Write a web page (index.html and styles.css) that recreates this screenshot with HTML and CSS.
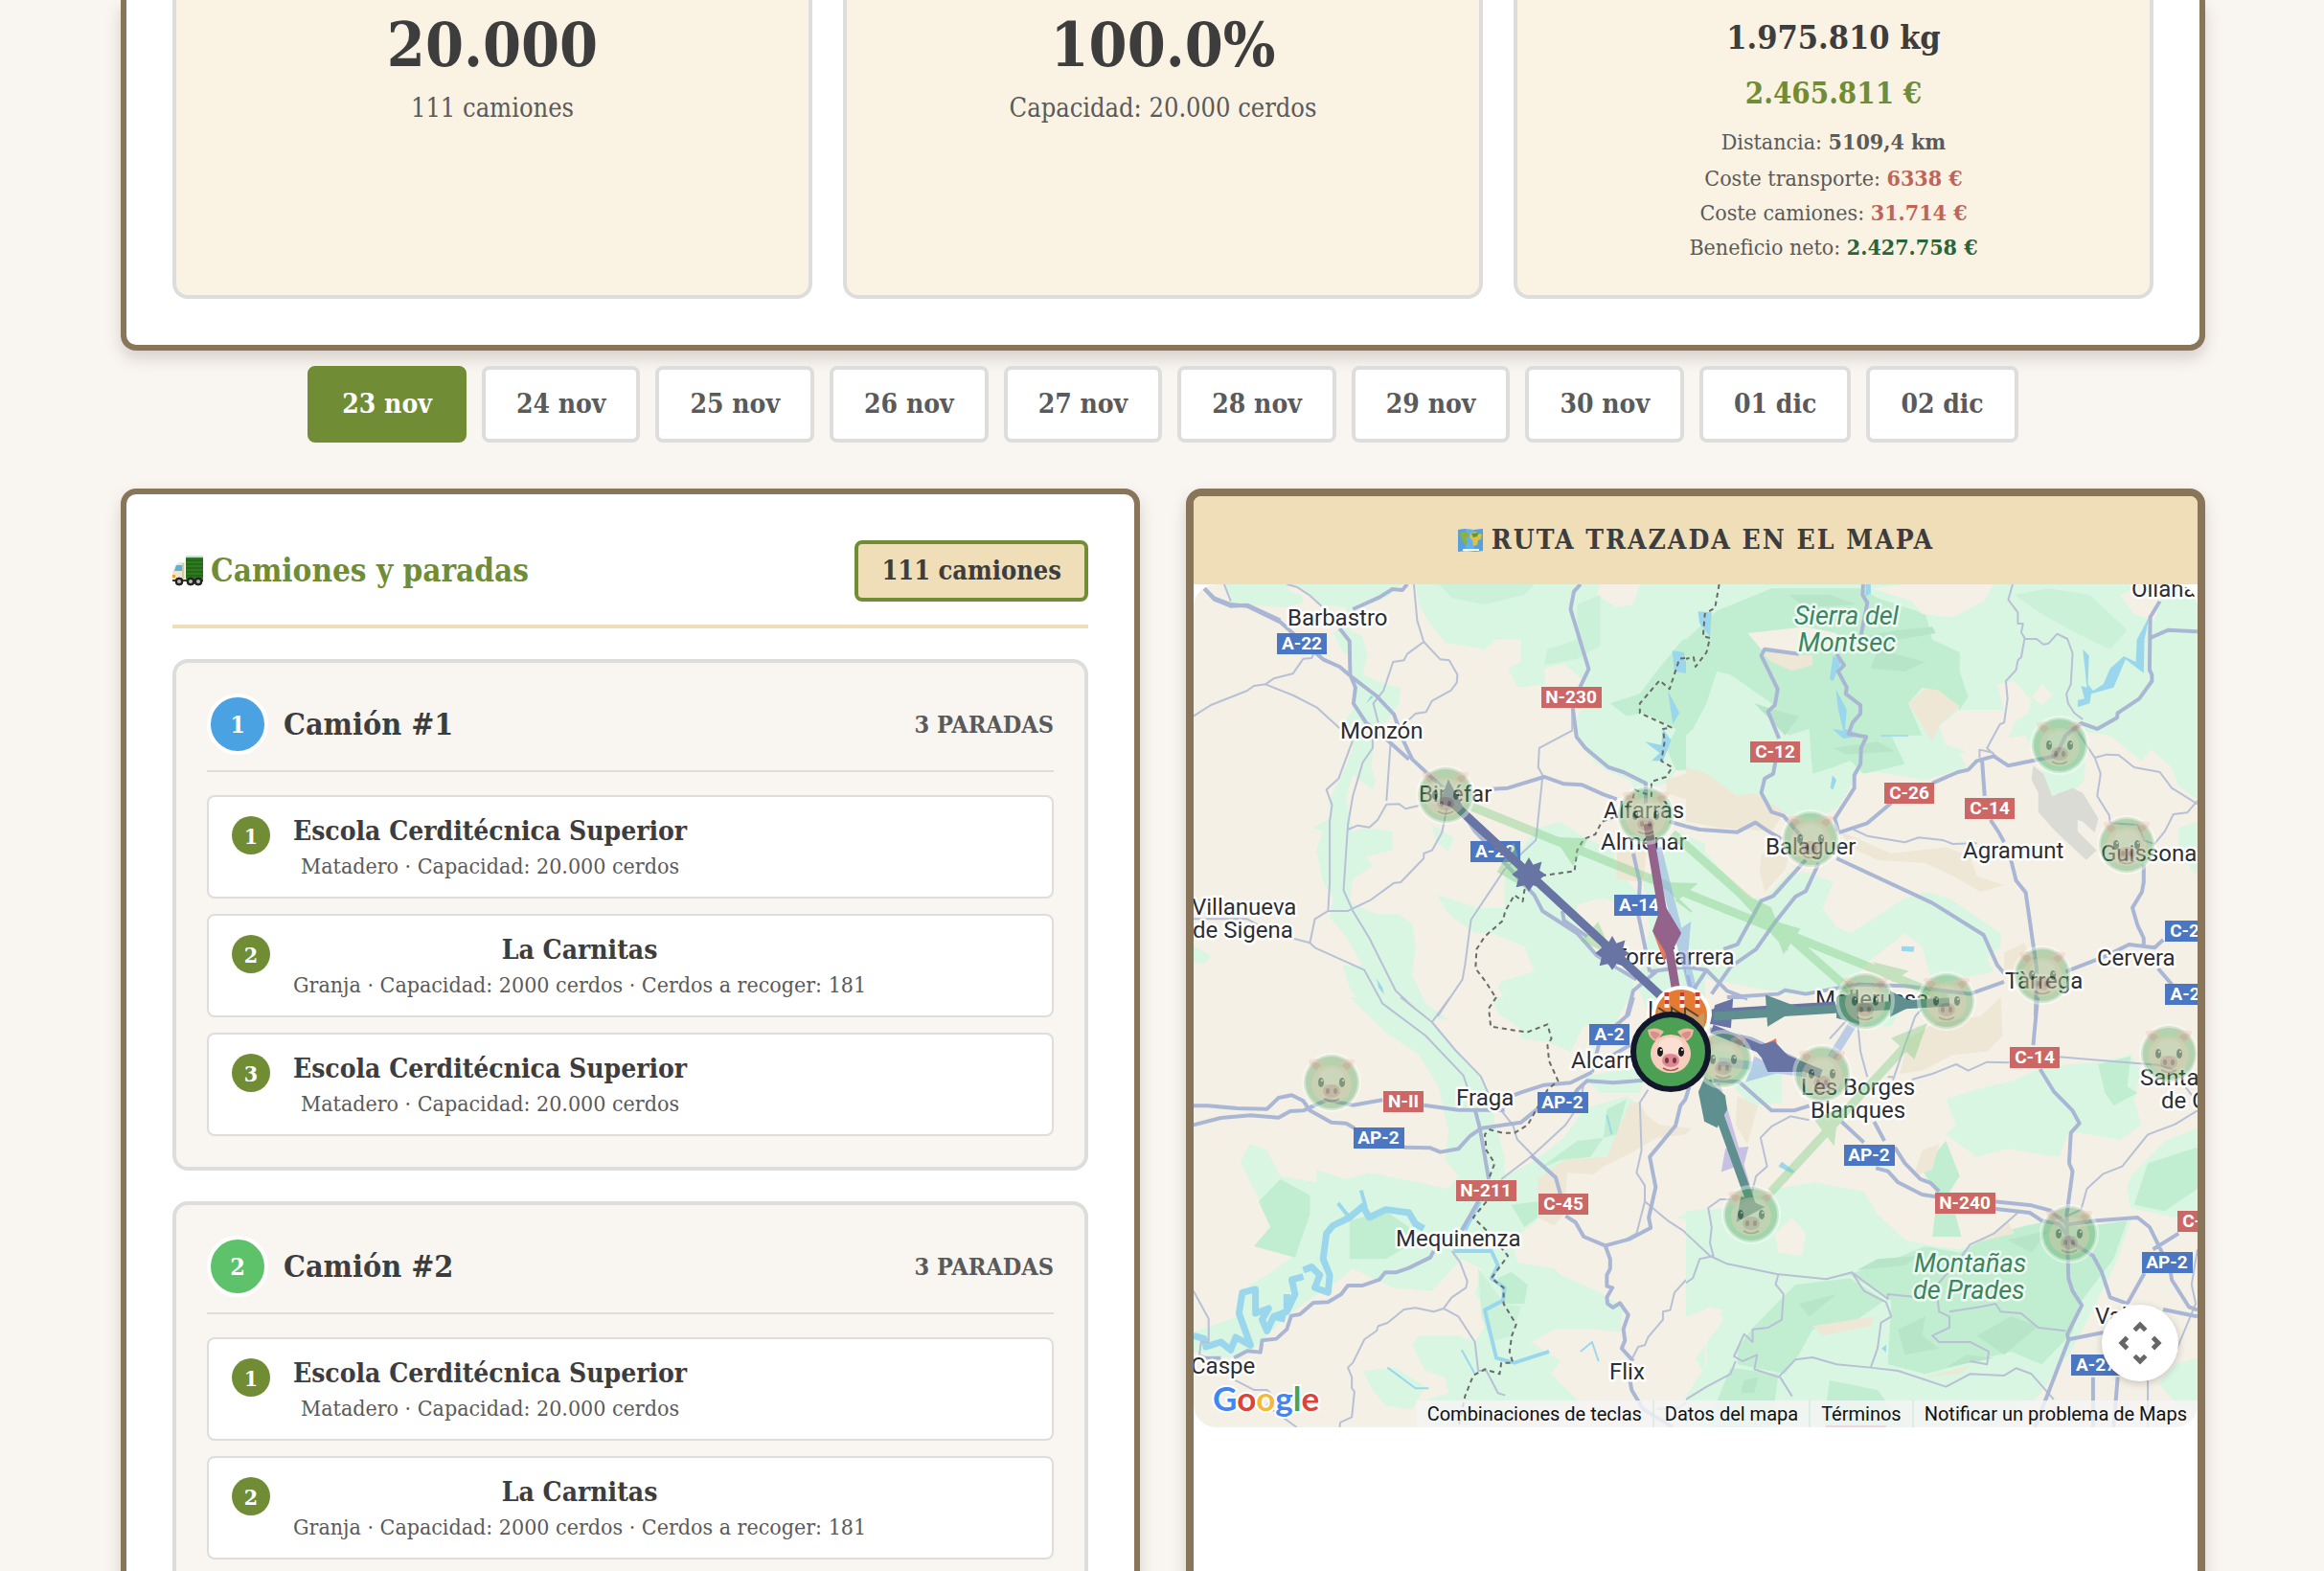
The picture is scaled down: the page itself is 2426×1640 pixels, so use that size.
FILE: index.html
```html
<!DOCTYPE html>
<html lang="es">
<head>
<meta charset="utf-8">
<meta name="viewport" content="width=device-width, initial-scale=1">
<title>Rutas de camiones</title>
<link rel="stylesheet" href="styles.css">
</head>
<body>
<div class="page">
  <section class="panel summary">
    <div class="stat">
      <div class="stat-value">20.000</div>
      <div class="stat-note">111 camiones</div>
    </div>
    <div class="stat">
      <div class="stat-value">100.0%</div>
      <div class="stat-note">Capacidad: 20.000 cerdos</div>
    </div>
    <div class="stat">
      <div class="stat-kg">1.975.810 kg</div>
      <div class="stat-income">2.465.811 €</div>
      <div class="stat-line stat-distance">Distancia: <strong>5109,4 km</strong></div>
      <div class="stat-line">Coste transporte: <strong class="cost">6338 €</strong></div>
      <div class="stat-line">Coste camiones: <strong class="cost">31.714 €</strong></div>
      <div class="stat-line">Beneficio neto: <strong class="profit">2.427.758 €</strong></div>
    </div>
  </section>

  <nav class="days">
    <button class="day active" type="button">23 nov</button>
    <button class="day" type="button">24 nov</button>
    <button class="day" type="button">25 nov</button>
    <button class="day" type="button">26 nov</button>
    <button class="day" type="button">27 nov</button>
    <button class="day" type="button">28 nov</button>
    <button class="day" type="button">29 nov</button>
    <button class="day" type="button">30 nov</button>
    <button class="day" type="button">01 dic</button>
    <button class="day" type="button">02 dic</button>
  </nav>

  <main class="columns">
    <section class="panel trucks">
      <header class="trucks-head">
        <h2>
          <svg class="emoji" viewBox="0 0 32 32" aria-hidden="true">
            <rect x="14" y="0" width="18" height="25" rx="1" fill="#2f7a1f"/>
            <path d="M14 5h18M14 9h18M14 13h18M14 17h18M14 21h18" stroke="#1c5512" stroke-width="1"/>
            <path d="M14 1h18" stroke="#cfdbe8" stroke-width="2"/>
            <path d="M4 9l3-2h6v19H0v-9z" fill="#eee6d0"/>
            <path d="M4 10h6v6H2z" fill="#5cb3d4"/>
            <path d="M11 8v16" stroke="#b8ac90" stroke-width="1"/>
            <rect x="0" y="20" width="3" height="3" fill="#e9a33a"/>
            <path d="M0 25h32v2H0z" fill="#3a3a3a"/>
            <g fill="#222" stroke="#222"><circle cx="7" cy="27" r="4"/><circle cx="19" cy="27" r="4"/><circle cx="27" cy="27" r="4"/></g>
            <g fill="#bbb"><circle cx="7" cy="27" r="2"/><circle cx="19" cy="27" r="2"/><circle cx="27" cy="27" r="2"/></g>
          </svg>
          Camiones y paradas
        </h2>
        <span class="badge">111 camiones</span>
      </header>

      <article class="truck">
        <header class="truck-head">
          <span class="truck-num blue">1</span>
          <h3>Camión #1</h3>
          <span class="stops-count">3 PARADAS</span>
        </header>
        <ol class="stops">
          <li class="stop"><span class="stop-num">1</span><div class="stop-info"><strong>Escola Cerditécnica Superior</strong><span>Matadero · Capacidad: 20.000 cerdos</span></div></li>
          <li class="stop"><span class="stop-num">2</span><div class="stop-info"><strong>La Carnitas</strong><span>Granja · Capacidad: 2000 cerdos · Cerdos a recoger: 181</span></div></li>
          <li class="stop"><span class="stop-num">3</span><div class="stop-info"><strong>Escola Cerditécnica Superior</strong><span>Matadero · Capacidad: 20.000 cerdos</span></div></li>
        </ol>
      </article>

      <article class="truck">
        <header class="truck-head">
          <span class="truck-num green">2</span>
          <h3>Camión #2</h3>
          <span class="stops-count">3 PARADAS</span>
        </header>
        <ol class="stops">
          <li class="stop"><span class="stop-num">1</span><div class="stop-info"><strong>Escola Cerditécnica Superior</strong><span>Matadero · Capacidad: 20.000 cerdos</span></div></li>
          <li class="stop"><span class="stop-num">2</span><div class="stop-info"><strong>La Carnitas</strong><span>Granja · Capacidad: 2000 cerdos · Cerdos a recoger: 181</span></div></li>
        </ol>
      </article>
    </section>

    <section class="panel route">
      <h2 class="route-head">
        <svg class="emoji" viewBox="0 0 28 28" aria-hidden="true">
          <path d="M1 3l8-1 9 1 9-1v23l-9 1-9-1-8 1z" fill="#63b0ea"/>
          <path d="M1 3l8-1v23l-8 1zM18 3l9-1v23l-9 1z" fill="#4a90cf" opacity=".5"/>
          <path d="M3 6l7-1 3 4-4 3 2 3-2 5-3-5-2-4z" fill="#8cb23c"/>
          <path d="M14 7l5-2 7 3-1 5-3 1-1 5-4 1-1-6-3-3z" fill="#d9c14a"/>
          <path d="M15 7l8-1-2 4-4 1z" fill="#5c9a38"/>
          <path d="M6 24h17" stroke="#fff" stroke-width="2"/>
        </svg>
        RUTA TRAZADA EN EL MAPA
      </h2>
      <div class="map">
        <svg class="map-canvas" viewBox="0 0 1048 880" preserveAspectRatio="xMidYMid slice" role="img" aria-label="Mapa de la ruta">
          <defs>
            <g id="pig">
              <path d="M-24-23q9-4 17 2l-8 10q-8-2-9-12zM24-23q-9-4-17 2l8 10q8-2 9-12z" fill="#f0b7a6"/>
              <path d="M-21-21q6-1 10 3l-5 5q-5-2-5-8zM21-21q-6-1-10 3l5 5q5-2 5-8z" fill="#d98f8a"/>
              <ellipse cx="0" cy="2" rx="21" ry="20" fill="#f7cdbd"/>
              <ellipse cx="0" cy="-6" rx="13" ry="9" fill="#fbdfd2"/>
              <ellipse cx="-11" cy="0" rx="3" ry="5" fill="#1d1d1f"/>
              <ellipse cx="11" cy="0" rx="3" ry="5" fill="#1d1d1f"/>
              <circle cx="-10" cy="-2" r="1" fill="#fff"/><circle cx="12" cy="-2" r="1" fill="#fff"/>
              <ellipse cx="0" cy="9" rx="9" ry="7" fill="#dd8794"/>
              <ellipse cx="-4" cy="9" rx="2" ry="3" fill="#7c3340"/>
              <ellipse cx="4" cy="9" rx="2" ry="3" fill="#7c3340"/>
              <path d="M-8 17q8 5 16 0" fill="none" stroke="#a8605a" stroke-width="1.5"/>
            </g>
            <g id="farm">
              <circle r="29" fill="#4ca053" fill-opacity=".38" stroke="#fff" stroke-opacity=".4" stroke-width="4"/>
              <use href="#pig" opacity=".34"/>
            </g>
          </defs>
          <rect width="1048" height="880" fill="#f4f0e6"/>

          <!-- north-west -->
          <g transform="translate(-6 -9) scale(.3444 .3333)">
            <g class="wood">
              <path d="M110 27H300L310 50 345 60 350 85 290 100 240 95 130 90Z"/>
              <path d="M320 27H650L600 70 510 105 490 170 530 190 545 250 530 310 600 340 645 350 640 400 600 460 560 470 565 530 555 600 570 640 560 670 520 640 500 620 480 700 500 800 540 790 620 800 620 860 540 880 560 910 500 950 490 1020 570 1060 640 1060 680 1090 690 1160 680 1250 720 1340 790 1390H560L490 1290 470 1220 530 1220 480 1130 430 1070 440 1010 410 960 390 860 410 800 380 790 430 760 430 700 470 620 500 540 470 460 500 420 500 250 470 240 440 180 490 140 480 100 400 90 350 40Z"/>
              <path d="M690 27H1568V620L1480 610 1460 650 1410 660 1370 700 1340 640 1290 620 1240 590 1190 530 1170 470 1190 420 1240 400 1170 300 1100 290 1090 340 1000 350 970 290 1010 270 1010 200 930 200 900 230 780 210 740 160 700 90Z"/>
              <path d="M1000 870L1060 790 1130 770 1200 820 1290 860 1300 920 1370 1000 1370 1040 1250 1010 1180 1030 1180 1100 1240 1180 1350 1260 1350 1300 1300 1390H1000L940 1290 950 1270 1050 1240 1020 1160 920 1120 870 1120 790 1060 755 1000 880 1040 960 1040 960 940Z"/>
              <path d="M1440 880L1490 800 1568 840V1380H1400L1360 1280 1380 1200 1400 1100 1380 960Z"/>
              <path d="M17 1160L70 1190 50 1215 17 1210ZM740 780L805 820 790 865 750 830Z"/>
            </g>
            <path fill="#f4f0e6" d="M1250 27H1370L1350 90 1300 100 1240 60ZM1080 290L1140 275 1200 330 1190 400 1090 420Z"/>
            <path class="wood-2" d="M1180 90L1250 60 1250 220 1180 260 1080 280 1090 230 1180 200ZM760 27H1050L1020 60 900 90 800 70Z"/>
            <path class="wood-3" d="M1500 200L1568 180V600L1480 610 1450 540 1480 480 1380 430 1330 440 1280 400 1370 370 1420 300Z"/>
            <path class="field" d="M1300 800L1390 870 1380 960 1300 950ZM1450 640L1568 600V720L1450 680Z"/>
            <path class="lake" d="M1545 112L1568 115 1565 200ZM1468 235L1505 240 1505 265 1540 275 1535 310 1475 300ZM1455 360L1490 430 1470 465ZM1440 480L1465 515 1440 580 1405 580 1430 555 1385 520 1435 530ZM540 400L555 375 562 380ZM572 1262L590 1290 595 1312 578 1290Z"/>
            <g class="lane">
              <path d="M17 440L70 405 180 360 200 345 235 340 260 322 318 307 350 260 375 258 410 180M235 340L320 375 390 412 460 478M300 27L330 35 370 62 405 95M110 27L130 80M685 27L695 140 715 207 665 245 655 265 622 270 593 360 562 400 577 460M715 207L765 262 792 265 817 310 815 335 797 360 740 392 722 427 690 432 650 470"/>
              <path d="M500 515L457 635 420 670 437 718 430 770V960L425 1050 385 1075 370 1150 385 1165 535 1235 590 1340 640 1380M560 480V540L530 585 500 690 485 780 472 985 500 1050 550 1135 630 1300 712 1380M614 530L602 705M700 720L660 730 640 715 602 716 575 765 550 788 515 782 485 795M785 730L770 805 740 860 715 870 715 885 645 960 625 962 555 1015 485 1050 425 1050"/>
              <path d="M1075 630L1055 828 960 920 858 1078 840 1220 832 1265 757 1380M1165 410V485L1065 540 1062 600 1078 630M17 1075H180L260 1120 370 1150"/>
            </g>
            <g class="road">
              <path d="M50 40L80 70 130 90 180 95 280 145 340 200 410 262 460 285 500 320 570 375 625 435 650 510 680 575 800 690 870 800 960 900 1050 1000 1075 1050 1180 1120 1240 1190 1360 1265"/>
              <path d="M50 40L80 74 130 95 180 92 280 140"/>
              <path d="M665 27L650 45 620 42 580 68 500 105M460 165L490 205 492 310 508 350 502 400 540 460 610 520 670 575M920 668L970 665 1080 630 1140 652 1195 655 1260 685 1300 700"/>
              <path d="M1190 27L1170 50 1160 105 1215 292 1165 400 1178 505 1205 540 1275 600 1320 615 1388 650V720M1350 870L1370 960 1365 1060 1385 1160 1400 1240M1460 770L1510 785M1400 1240L1510 1225M1330 1380L1350 1300 1425 1235M1135 1050L1140 1080 1210 1130M1500 1180L1525 1300"/>
            </g>
            <path class="border" d="M1568 235L1540 280 1535 255 1490 260 1460 355 1430 328 1370 400V430L1465 475 1440 480 1445 520 1435 580 1468 600 1450 630 1405 645V690L1355 670 1340 740 1255 770 1235 810 1200 825 1180 860 1172 925 1070 940 1020 985 1015 1020 990 1000 962 1050 955 1080 900 1130 875 1170 872 1230 905 1275 932 1320"/>
          </g>

          <!-- north-east -->
          <g transform="translate(514 -9) scale(.3571 .3333)">
            <g class="wood">
              <path d="M0 27H1495V700L1440 660 1420 600 1360 545 1330 580 1240 500 1170 490 1165 640 1120 690 1060 680 1040 600 990 500 860 520 800 560 820 600 700 640 560 615 500 620 470 680 440 730 380 760 300 750 200 700 140 690 60 620 0 600Z"/>
              <path d="M0 860L60 870 180 1010 230 1010 300 930 360 930 430 960 400 1040 440 1100 480 1120 640 1010 700 990 770 1010 920 1120 920 1160 880 1200 900 1240 720 1280 690 1160 640 1120 520 1220 480 1300 300 1310 0 1250Z"/>
              <path d="M1440 790L1495 770V940L1440 870Z"/>
            </g>
            <path class="wood-3" d="M90 110L250 40H515L560 70 700 120 720 200 800 240 800 300 825 380 800 420 740 360 690 350 650 400 690 500 600 500 640 590 520 620 480 580 430 600 370 620 360 480 300 500 250 400 130 310 90 300 60 400 20 480 0 500V200Z"/>
            <path class="wood-2" d="M960 60L1060 40 1180 60 1290 170 1240 230 1140 180 1040 120Z"/>
            <path class="shade" d="M520 190L620 170 720 160 730 180 600 205ZM300 60L420 60 500 90 350 100ZM430 540L560 520 610 550 470 560ZM560 230L700 270 640 300 540 290ZM200 400L290 500 330 440 260 420Z"/>
            <path fill="#f4f0e6" d="M545 40L640 27H900L870 80 780 130 690 120 660 80ZM1270 60L1340 27H1400L1370 140 1310 120ZM180 180L350 160 440 180 430 230 330 240 220 230ZM740 470L800 420 930 420 910 340 960 330 1010 390 1000 430 960 460 940 520 890 510 850 560 760 530ZM1040 340L1072 375 1040 405 1010 380Z"/>
            <path class="field" d="M220 240L370 250 370 280 310 298 250 270ZM650 400L700 352 740 360 800 410 740 470 720 520ZM0 600L60 620 150 690 200 680 290 740 250 800 100 790 0 770ZM450 800L600 870 760 850 830 880 850 940 930 970 860 990 780 940 700 900 560 890 480 850ZM220 870L300 880 290 920 230 990 215 930ZM930 1180L990 1150 1020 1240 930 1260Z"/>
            <path fill="#dadbd5" d="M1015 595L1045 620 1070 690 1130 665 1160 680 1205 760 1195 805 1160 770 1145 765V800L1200 860 1170 890 1080 800 1030 740V680L1010 640Z"/>
            <path class="lake" d="M525 27H540V55L525 65ZM35 112L75 115 70 190 40 150ZM430 250L455 270 430 330 420 325ZM438 355L470 420 465 480 520 500 460 510 428 480 460 485 445 420ZM1355 125L1340 200 1338 305 1285 262 1250 350 1185 370 1180 400 1145 412V390L1165 385 1155 345 1172 350 1160 230 1178 250 1175 340 1190 360 1220 340 1240 290 1280 252 1315 270 1318 200ZM428 625L440 640 430 670 422 665ZM630 1160L668 1162 665 1178 630 1175ZM570 499H650V503H570Z"/>
            <path class="lane" d="M955 27L942 75 970 115V150H985L980 178 990 195 980 255 970 265 965 295 935 330 940 385 930 460 918 465 895 510 880 540 905 565M990 198H1025L1045 215 1060 212 1085 182 1115 198 1130 243 1125 340 1112 370 1117 400 1135 430 1160 450M1140 480L1195 570 1212 620 1202 690 1237 750 1240 775M1195 570L1230 560 1265 562 1310 600 1385 615 1420 665 1495 715M1495 705L1465 742 1425 747 1400 800 1370 840 1340 830 1320 780 1240 775M490 795L530 815 640 835 680 820 750 828 780 840 850 838M858 570V545L900 555"/>
            <g class="road">
              <path d="M518 27L516 60 530 85 512 185M440 245L462 280 445 300 470 350 467 370 510 405V432L487 460 475 495 527 505 512 540 510 590 492 625V665L435 760 445 800M330 245L230 230 220 250 268 355 260 405 240 425 272 510M262 580L255 620 230 635 220 680 250 740 285 752 340 820M0 785L40 795 150 803 203 773 240 800 280 825"/>
              <path d="M445 805L530 775 600 712M720 650L795 615 825 608 850 580 900 565 942 595 1080 565 1110 500 1155 462 1202 480 1260 445 1262 430 1325 385 1362 330V310L1355 295 1357 130 1385 80M1357 195L1410 170 1495 175M865 570L873 690M890 765L912 800 930 835M950 890L965 955 993 992 1025 1230 1022 1380"/>
              <path d="M440 885L720 1025 870 1125 910 1220 930 1245M350 890L255 1003 220 1018 150 1155 110 1170M388 900L350 988 320 1005 257 1090 205 1170 130 1225 75 1310M1338 905V960L1333 990 1305 1040 1320 1095 1338 1135V1165M0 1225L60 1235 120 1300 180 1325M120 1320L270 1310 290 1298 350 1310 500 1280 640 1285 830 1310 930 1272M1110 1240L1230 1190 1295 1155 1370 1165 1395 1140M1380 1230L1420 1280M60 1235L20 1300"/>
            </g>
            <path class="border" d="M97 27L85 100 55 120 50 190 70 195 60 240 28 285 22 255 0 260"/>
          </g>

          <!-- south-west -->
          <g transform="translate(-6 431) scale(.3444 .3333)">
            <g class="wood">
              <path d="M490 0H640L740 80 880 240 920 320 930 390 960 500 960 560 1040 520 1140 440 1200 350 1330 310 1360 330 1340 420 1290 480 1240 520 1150 510 1060 570V700L980 760 1000 830 1110 850 1130 870 1240 920 1320 970 1310 1050 1240 1040 1110 1040 1040 1080 1100 1120 1130 1140 1100 1180 1190 1270 1000 1300 820 1347H740L700 1270 790 1240 780 1190 720 1170 680 1090 700 1060 820 1060 870 1080 920 1000 870 930 890 850 830 820 740 920 620 910 500 850 440 900 350 960 300 1000 200 1100 120 1130 17 1110V1050L150 1000 160 920 270 850 320 810 200 780 250 720 210 620 160 520 170 490 190 460 240 480 280 560 390 580V540L480 570 550 550 700 580 790 600 820 560 780 510 790 420 760 280 700 180 600 110Z"/>
              <path d="M920 0H1320L1300 80 1200 90 1160 170 1090 140 1010 130V100L940 50ZM530 1170L630 1160 720 1220 680 1290 600 1280 560 1230ZM1480 690L1568 660V710ZM1510 1000L1568 950V980ZM1530 1050L1568 1030V1180L1530 1120ZM1200 250L1400 210 1370 300 1250 300Z"/>
            </g>
            <path class="wood-3" d="M280 570L370 620V680L325 815 200 780 250 720 215 640ZM490 700L600 670 670 720 680 770 600 820H490ZM940 880L980 860 1030 900 1020 960 960 960ZM980 650L1060 640V690L1020 720ZM1270 350L1330 320 1300 430 1260 440ZM1060 540L1180 450 1260 440 1220 500 1130 510Z"/>
            <path class="wood-2" d="M880 850L960 960 1010 970 980 1060 920 1080 890 1000Z"/>
            <path class="field" d="M1340 330H1370L1390 370 1430 400 1525 410 1510 430 1420 440 1340 490 1260 530 1230 555 1150 550 1140 680 1110 715 1060 690V570L1140 510 1270 500Z"/>
            <path class="river" d="M17 1060L50 1070 55 1095 100 1080 130 1105 145 1065 190 1090 155 990 165 925 205 915 205 990 245 975 225 1010 240 1045 260 1000 300 985 325 930 315 885 350 875M350 855L375 845 400 870 385 910 425 925 430 870 410 820 420 740 440 715 490 690 530 655 550 690 600 665 670 675 690 710 715 725M260 1000L295 1008M300 985V930"/>
            <path class="river thin" d="M455 645L490 690M525 605L540 660M805 795H920L940 840 920 880 960 910 955 950 900 980 935 1130 990 1145 1050 1125 1095 1110M885 640L840 730"/>
            <path class="river hair" d="M1190 1110L1225 1080 1245 1140M605 1160L690 1225H730M830 1105L870 1180M1270 370L1285 430"/>
            <path class="lane" d="M580 0L590 20 720 120 835 245 850 290M645 0L740 78 810 165 888 248 910 300M795 0L740 78M950 355L985 400 998 445 1045 495 1145 400 1190 330 1200 270M1045 495L950 570M1395 290L1370 330 1375 480 1360 550 1385 590V640L1455 700 1500 730 1568 795M1385 640L1360 740 1330 757M800 795L825 830 847 890 843 910 800 940 775 975 820 1000 870 1080 880 1170 905 1170 940 1240 962 1247M775 975L745 985 690 973 655 978 605 1020 577 1030 572 1045 535 1072 500 1145 485 1160 497 1190V1225L505 1235 497 1315 462 1332 460 1347M17 920L63 1007V1080H40L35 1120 60 1130M135 1195L200 1230H240L260 1250 240 1280 330 1347M1510 885L1475 925 1462 980 1440 985V1010L1395 1065 1385 1090 1365 1095 1345 1135M1568 1225L1490 1285 1420 1290"/>
            <g class="road">
              <path d="M17 340H60L150 348 240 350 275 315 315 307 350 325 370 355 435 392 480 395 505 410M655 470L735 472 765 485 820 475 855 435 890 410 1010 392 1060 350M17 400L100 378 190 370 275 377 310 357 350 355 420 322 500 338 590 322M715 338L820 353H960M980 310L1010 298 1080 275 1160 268 1225 235M1150 345L1180 290 1210 262 1290 268 1380 260M870 350L885 410 912 570M880 640L830 730"/>
              <path d="M745 795L735 815 670 848 630 862H598L580 885 530 903H485L465 930 425 955 380 957 340 993 313 998 300 1040 268 1070 225 1075 220 1112 180 1108 140 1130M35 1130H100M1350 0L1335 55 1250 130 1225 235M1040 495L1115 565 1130 620M1145 685L1175 705 1200 750 1265 778 1340 757 1403 722 1397 690 1418 595 1400 500 1478 403 1493 340 1508 320 1520 280M1265 778L1280 820V850L1270 870V905L1287 910 1270 940 1272 960 1288 972 1310 958 1335 995 1320 1040 1325 1075 1315 1100 1350 1140M1340 1200L1345 1230 1380 1290 1470 1347M1340 150L1290 180"/>
            </g>
            <path class="border" d="M935 0L912 35 918 92 1028 110 1090 85 1102 130 1090 150 1095 200 1122 262 1090 290 1030 400 990 425H955L915 415 900 430 905 480 930 520 912 570M905 640L865 690 910 735 970 810 945 845 920 880 957 910V960L995 1025 982 1060 975 1110 985 1145H950L945 1180 900 1165 865 1185 840 1250 820 1347"/>
          </g>

          <!-- south-east -->
          <g transform="translate(514 431) scale(.3571 .3333)">
            <g class="wood">
              <path d="M760 320L860 285 960 260 1050 215 1200 205 1300 180 1330 230 1310 320 1330 400 1270 447 1120 420 1090 500 940 475 850 500 760 430 790 400ZM0 670L120 660 260 600 380 580 520 610 560 680 640 760 700 775 800 790 1000 710 1100 730 1300 700 1250 850 1130 1100 1030 1250 900 1347H0V1250L60 1150V1050L110 980 70 970 0 1000ZM1300 560L1400 450 1495 410V680L1430 690 1300 660 1290 600ZM1380 1210L1430 1150 1495 1130V1300L1440 1280ZM60 150L280 240V330L190 340 130 270ZM560 0L640 10 600 90 520 90Z"/>
            </g>
            <path class="wood-3" d="M720 500L760 450 800 560 770 610 805 750H720L735 620 690 540ZM440 880L560 840 700 780 800 800 900 740 1060 700 1150 720 1290 700 1250 820 1150 960 1130 1050 1040 1150 950 1110 700 1180 590 1150 600 950 480 870ZM200 1030L320 900 480 880 580 950 500 1010 370 1040 330 1120 290 1180 150 1150V1100ZM130 1160L270 1180 250 1347H60ZM1310 650L1350 520 1495 470V600L1400 670ZM1205 210L1300 185 1290 280 1320 300 1250 340 1225 300ZM420 1200L560 1230 640 1347H400Z"/>
            <path class="shade" d="M500 855L560 820 680 810 640 840ZM620 1040L700 1000 690 1060 740 1100 640 1120ZM850 1060L950 1000 1030 1030 930 1120ZM940 760L1060 730 1010 800ZM330 960L440 930 360 1000ZM820 1120L760 1160 900 1130ZM170 1200L210 1190 200 1240 160 1240Z"/>
            <path class="field" d="M625 240L650 130 730 80 860 60 920 0 925 120 880 170 780 180 690 230ZM665 560L690 480 740 460 720 540ZM145 400L150 310 210 340 180 460ZM370 1030L550 1000 540 1030 400 1060ZM860 770L940 700 960 740 880 760ZM690 1190L830 1155 800 1180Z"/>
            <path fill="#f4f0e6" d="M260 740L310 690 350 740 340 810 270 800ZM0 1010L90 980 110 1010 60 1080 0 1180Z"/>
            <path class="lake" d="M280 515L318 545 310 552 270 530ZM572 1100L585 1088V1112Z"/>
            <path class="lane" d="M660 258L720 240 790 210 825 230 880 203 945 205M1090 187L1240 200 1380 212 1420 225 1495 330M1495 355L1430 398 1350 430 1275 530 1220 553 1172 600 1155 665 1115 685M190 620L205 560 237 530 218 440 250 405 305 373 360 385M0 740L70 810 120 835 265 867 410 883 485 862 590 945V930L665 938M130 633H100L65 660 75 720 70 770 80 810 40 820 20 880 0 895M485 862L520 920 585 955 600 1000 570 1020 560 1100 540 1160M0 1260L60 1220 130 1180 145 1140M270 867L262 900 285 930 280 1010 240 1035 195 1040V1080L170 1055 140 1125 165 1140 208 1120 200 1165 270 1190 320 1135 370 1128 440 1150 540 1160 620 1170 760 1220 830 1180 930 1185 965 1162 1010 1180 1075 1260M735 940L740 985 770 1000V1035L720 1060 740 1080H830L885 1110 880 1150 830 1140M770 985L860 970 905 960 920 985 980 990 1030 1035 1110 1045M970 675L900 740 830 775 800 820 735 900M275 1190L310 1250M500 60L510 170 530 250M590 250H605M720 0L670 60 640 150 605 260M420 130L480 60M1495 790L1478 900 1490 960 1420 1140M1350 1200V1347"/>
            <g class="road">
              <path d="M80 260L155 265 250 355H315L360 340M70 100L190 130 330 200M455 390L520 455M555 535L590 545 620 580 690 618 730 625M550 390L580 450M610 470L640 520 685 570 715 582 740 608M900 640L1010 652 1065 668 1115 712 1200 700 1320 690 1355 720 1415 850 1420 885 1470 970 1495 980M900 662L1005 675 1040 700 1090 710 1130 770 1190 810 1215 860 1240 940 1290 960 1340 865M1365 790L1440 740"/>
              <path d="M1028 0L1015 150M1035 225L1075 295 1130 355 1150 395 1125 425 1120 520 1130 545 1113 680 1118 880 1130 920 1157 965 1115 1055 1118 1075 1020 1347M1118 1072L1220 1050M1395 978L1495 1000M1190 1190V1347M1262 1190L1250 1347"/>
            </g>
          </g>

          <!-- road shields -->
          <g class="shield-blue">
            <rect x="87" y="51" width="52" height="22"/><rect x="289" y="268" width="52" height="22"/><rect x="439" y="324" width="52" height="22"/>
            <rect x="1014" y="351" width="52" height="22"/><rect x="1014" y="417" width="42" height="22"/><rect x="413" y="459" width="42" height="22"/>
            <rect x="359" y="530" width="53" height="22"/><rect x="167" y="567" width="53" height="22"/><rect x="679" y="585" width="53" height="22"/>
            <rect x="990" y="697" width="53" height="22"/><rect x="916" y="804" width="52" height="22"/>
          </g>
          <g class="shield-red">
            <rect x="363" y="107" width="63" height="22"/><rect x="581" y="164" width="52" height="22"/><rect x="721" y="207" width="52" height="22"/>
            <rect x="805" y="223" width="52" height="22"/><rect x="198" y="529" width="42" height="22"/><rect x="274" y="622" width="63" height="22"/>
            <rect x="360" y="636" width="52" height="22"/><rect x="852" y="483" width="52" height="22"/><rect x="774" y="635" width="63" height="22"/>
            <rect x="1027" y="654" width="52" height="22"/><rect x="660" y="878" width="63" height="22"/>
          </g>
          <g class="shield-text">
            <text x="113" y="68">A-22</text><text x="315" y="285">A-22</text><text x="465" y="341">A-14</text>
            <text x="1040" y="368">C-25</text><text x="1035" y="434">A-2</text><text x="434" y="476">A-2</text>
            <text x="385" y="547">AP-2</text><text x="193" y="584">AP-2</text><text x="705" y="602">AP-2</text>
            <text x="1016" y="714">AP-2</text><text x="942" y="821">A-27</text>
            <text x="394" y="124">N-230</text><text x="607" y="181">C-12</text><text x="747" y="224">C-26</text>
            <text x="831" y="240">C-14</text><text x="219" y="546">N-II</text><text x="305" y="639">N-211</text>
            <text x="386" y="653">C-45</text><text x="878" y="500">C-14</text><text x="805" y="652">N-240</text>
            <text x="1053" y="671">C-37</text>
          </g>

          <!-- place names -->
          <g class="place">
            <text x="98" y="43">Barbastro</text><text x="153" y="161">Monzón</text><text x="235" y="227">Binéfar</text>
            <text x="428" y="244">Alfarràs</text><text x="425" y="277">Almenar</text>
            <text x="-2" y="345">Villanueva</text><text x="-1" y="369">de Sigena</text>
            <text x="438" y="397">Torrefarrera</text><text x="474" y="452">Lleida</text>
            <text x="979" y="13">Oliana</text><text x="597" y="282">Balaguer</text><text x="803" y="286">Agramunt</text>
            <text x="947" y="289">Guissona</text><text x="847" y="422">Tàrrega</text><text x="943" y="398">Cervera</text>
            <text x="649" y="441">Mollerussa</text><text x="394" y="505">Alcarràs</text><text x="274" y="544">Fraga</text>
            <text x="211" y="691">Mequinenza</text><text x="-3" y="824">Caspe</text><text x="434" y="830">Flix</text>
            <text x="634" y="533">Les Borges</text><text x="644" y="557">Blanques</text>
            <text x="988" y="523">Santa Coloma</text><text x="1010" y="547">de Queralt</text><text x="941" y="772">Valls</text>
          </g>
          <g class="place range">
            <text x="627" y="42">Sierra del</text><text x="631" y="70">Montsec</text>
            <text x="752" y="718">Montañas</text><text x="751" y="746">de Prades</text>
          </g>

          <!-- routes -->
          <g class="trace light-green">
            <path d="M290 232L786 432M500 260L690 428M603 634L760 464"/>
            <path class="head" d="M378 265L410 266 396 292ZM488 312L524 313 504 330 520 342ZM562 318L602 338 620 382ZM604 352L632 360 616 384ZM712 396L744 404 730 414ZM650 560L672 548 668 584ZM730 474L764 460 752 494ZM318 300L334 272 346 316ZM406 372L422 354 436 386Z"/>
          </g>
          <g class="trace light-blue">
            <path d="M484 275L521 424M548 498L640 510M666 494L690 456"/>
            <path class="head" d="M506 362L518 354 514 400ZM578 518L586 494 614 508Z"/>
          </g>
          <g class="trace lilac">
            <path d="M545 522L580 640"/><path class="head" d="M552 612L556 590 578 588 574 604Z"/>
          </g>
          <path fill="#e8795c" d="M480 364L496 352 492 396ZM584 486L608 474 610 490Z"/>
          <g class="trace mauve">
            <path d="M474 250L504 426"/><path class="head" d="M480 362L490 334 508 364 496 388Z"/>
          </g>
          <g class="trace indigo">
            <path d="M268 226L488 430M541 464L655 511M541 448L670 440"/>
            <path class="head" d="M258 228L266 206 282 236ZM350 287L354 294 362 291 360 299 366 303 360 308 363 316 354 313 350 319 346 313 338 315 340 307 334 303 340 298 338 290 346 294ZM437 369L441 376 449 373 447 381 453 385 447 390 450 398 441 395 437 401 433 395 425 397 427 389 421 385 427 380 425 372 433 376ZM585 483L606 478 634 508 600 508 594 494ZM545 440L562 434 560 462 540 458Z"/>
          </g>
          <g class="trace teal">
            <path d="M543 451L789 436M536 518L584 652"/>
            <path class="head" d="M598 430L630 442 600 460ZM672 432L690 428 694 458 672 452ZM728 426L752 438 728 450ZM528 530L534 516 554 534 556 548 546 566 534 560ZM572 640L594 650 568 664Z"/>
          </g>

          <!-- farms -->
          <g>
            <use href="#farm" x="263" y="220"/><use href="#farm" x="472" y="241"/><use href="#farm" x="904" y="168"/>
            <use href="#farm" x="644" y="266"/><use href="#farm" x="974" y="272"/><use href="#farm" x="886" y="408"/>
            <use href="#farm" x="701" y="435"/><use href="#farm" x="786" y="435"/><use href="#farm" x="656" y="511"/>
            <use href="#farm" x="553" y="496"/><use href="#farm" x="582" y="658"/><use href="#farm" x="914" y="678"/>
            <use href="#farm" x="1018" y="490"/><use href="#farm" x="144" y="520"/>
          </g>
          <g transform="translate(509 450)">
            <circle r="29" fill="#e57a33" stroke="#fff" stroke-width="4"/>
            <path d="M-24-8l14 9v-9l14 9v-9l14 9 6-4V16h-48z" fill="#c89a62"/>
            <path d="M-24-8l14 9v-9l14 9v-9l14 9" fill="none" stroke="#5a4433" stroke-width="2"/>
            <path d="M-15-24v16M1-24v16M17-24v16" stroke="#f6f2ee" stroke-width="5"/>
            <path d="M-15-24v4M-15-16v4M1-24v4M1-16v4M17-24v4M17-16v4" stroke="#d5382b" stroke-width="5"/>
          </g>
          <g transform="translate(498 488)">
            <circle r="39" fill="#4ca053" stroke="#12172b" stroke-width="6"/>
            <use href="#pig"/>
          </g>

          <text class="google" x="20" y="863"><tspan fill="#4285f4">G</tspan><tspan fill="#db4437">o</tspan><tspan fill="#f4b93a">o</tspan><tspan fill="#4285f4">g</tspan><tspan fill="#4ca053">l</tspan><tspan fill="#db4437">e</tspan></text>
        </svg>
        <button class="pan" type="button" aria-label="Controles de la cámara del mapa">
          <svg viewBox="0 0 48 48" aria-hidden="true"><path d="M18 10l6-6 6 6M18 38l6 6 6-6M10 18l-6 6 6 6M38 18l6 6-6 6" fill="none" stroke="#666" stroke-width="5"/></svg>
        </button>
        <div class="map-links">
          <button type="button">Combinaciones de teclas</button>
          <button type="button">Datos del mapa</button>
          <a href="#terminos">Términos</a>
          <a href="#notificar">Notificar un problema de Maps</a>
        </div>
      </div>
    </section>
  </main>
</div>
</body>
</html>
```

FILE: styles.css
```css
* { box-sizing: border-box; }

body {
  margin: 0;
  background: #f9f6f1;
  color: #3d3d3d;
  font-family: "DejaVu Serif Condensed", "DejaVu Serif", serif;
}

h2, h3, ol { margin: 0; padding: 0; }

.page {
  height: 100vh;
  overflow: hidden;
  padding: 0 124px 0 126px;
}

.panel {
  background: #fff;
  border: 6px solid #89755a;
  border-radius: 16px;
  box-shadow: 0 8px 16px rgba(60, 40, 30, .18);
}

/* Summary */
.summary {
  display: grid;
  grid-template-columns: repeat(3, 1fr);
  gap: 32px;
  padding: 0 48px 48px;
  border-top: 0;
  border-radius: 0 0 16px 16px;
}
.stat {
  padding: 12px 24px 32px;
  background: #faf2e2;
  border: 4px solid #ddd;
  border-top: 0;
  border-radius: 0 0 16px 16px;
  text-align: center;
}
.stat-value { font-size: 64px; line-height: 70px; font-weight: bold; }
.stat-note { margin-top: 8px; font-size: 27px; line-height: 46px; color: #5a5a5a; }
.stat-kg { font-size: 34px; line-height: 54px; font-weight: bold; }
.stat-income { font-size: 31px; line-height: 62px; font-weight: bold; color: #708d36; }
.stat-line { font-size: 23px; line-height: 35px; color: #5a5a5a; }
.stat-distance { line-height: 40px; }
.cost { color: #c0645a; }
.profit { color: #2a6438; }

/* Day tabs */
.days {
  display: flex;
  justify-content: center;
  gap: 16px;
  margin-top: 16px;
}
.day {
  height: 80px;
  padding: 0 32px;
  background: #fff;
  border: 4px solid #ddd;
  border-radius: 8px;
  color: #5a5a5a;
  font: bold 28px/36px "DejaVu Serif Condensed", "DejaVu Serif", serif;
}
.day.active { background: #708d36; border-color: #708d36; color: #fff; }

.columns {
  display: grid;
  grid-template-columns: 1fr 1fr;
  gap: 48px;
  margin-top: 48px;
}

/* Trucks */
.trucks { padding: 48px; }
.trucks-head {
  display: flex;
  align-items: center;
  justify-content: space-between;
  padding-bottom: 24px;
  border-bottom: 4px solid #f0deb8;
}
.trucks-head h2 {
  display: flex;
  align-items: center;
  gap: 8px;
  color: #708d36;
  font-size: 33px;
  line-height: 40px;
}
.emoji { width: 32px; height: 32px; flex: none; }
.badge {
  padding: 10px 24px;
  background: #f0deb8;
  border: 4px solid #708d36;
  border-radius: 8px;
  font-size: 27px;
  line-height: 36px;
  font-weight: bold;
}
.truck {
  margin-top: 32px;
  padding: 32px;
  background: #f9f6f1;
  border: 4px solid #ddd;
  border-radius: 16px;
}
.truck-head {
  display: flex;
  align-items: center;
  gap: 16px;
  padding-bottom: 16px;
  border-bottom: 2px solid #ddd;
}
.truck-head h3 { flex: 1; font-size: 32px; line-height: 40px; }
.truck-num {
  display: grid;
  place-items: center;
  width: 64px;
  height: 64px;
  border: 4px solid #fff;
  border-radius: 50%;
  color: #fff;
  font-size: 25px;
  font-weight: bold;
}
.blue { background: #4aa2e3; }
.green { background: #5dc26a; }
.stops-count { color: #5a5a5a; font-size: 25px; font-weight: bold; }
.stops {
  display: grid;
  gap: 16px;
  margin-top: 24px;
  list-style: none;
}
.stop {
  display: flex;
  gap: 24px;
  padding: 16px 24px;
  background: #fff;
  border: 2px solid #ddd;
  border-radius: 8px;
}
.stop-num {
  display: grid;
  place-items: center;
  width: 40px;
  height: 40px;
  margin-top: 4px;
  border-radius: 50%;
  background: #708d36;
  color: #fff;
  font-size: 23px;
  font-weight: bold;
}
.stop-info { text-align: center; }
.stop-info strong { display: block; font-size: 28px; line-height: 40px; }
.stop-info span { display: block; color: #5a5a5a; font-size: 23px; line-height: 32px; }

/* Map */
.route { border-width: 8px; overflow: hidden; }
.route-head {
  display: flex;
  align-items: center;
  justify-content: center;
  gap: 8px;
  padding: 26px;
  background: #f0deb8;
  font-size: 28px;
  line-height: 40px;
  letter-spacing: 2px;
}
.route-head .emoji { width: 28px; height: 28px; }
.map {
  position: relative;
  height: 880px;
  overflow: hidden;
  border-radius: 24px;
}
.map-canvas { display: block; width: 100%; height: 100%; }
.wood { fill: #d9f6e3; }
.wood-2 { fill: #ccf1d9; }
.wood-3 { fill: #c1eed0; }
.shade { fill: #b7e5c8; }
.field { fill: #eee7d5; }
.lake { fill: #9bd7ec; }
.river, .lane, .road, .border { fill: none; stroke-linejoin: round; }
.lane path, .road path, .river, .lane, .border { vector-effect: non-scaling-stroke; }
.river { stroke: #9bd7ec; stroke-width: 7px; }
.river.thin { stroke-width: 4px; }
.river.hair { stroke-width: 2px; }
.lane { stroke: #b8c0d6; stroke-width: 2px; }
.road { stroke: #a9b7d5; stroke-width: 4px; }
.border { stroke: #6a6a6a; stroke-width: 2px; stroke-dasharray: 5 4; }
.shield-blue { fill: #4a76c2; }
.shield-red { fill: #cb6866; }
.shield-text {
  fill: #fff;
  font: bold 19px Roboto, sans-serif;
  text-anchor: middle;
}
.place {
  fill: #2c2e33;
  stroke: #fff;
  stroke-width: 5px;
  stroke-linejoin: round;
  paint-order: stroke;
  font: 24px Roboto, sans-serif;
}
.range { fill: #3c8560; font: italic 27px Roboto, sans-serif; stroke: #eefaf2; }
.trace path { fill: none; stroke: var(--trace); stroke-width: 9px; }
.trace .head { fill: var(--trace); stroke-width: 2px; }
.light-green { --trace: #82cf86; opacity: .42; }
.light-blue { --trace: #97b4e6; opacity: .6; }
.lilac { --trace: #b5aee2; opacity: .7; }
.mauve { --trace: #93638c; }
.indigo { --trace: #6874a3; }
.teal { --trace: #5f8f8f; }
.google {
  font: bold 35px Lato, sans-serif;
  stroke: #fff;
  stroke-width: 4px;
  paint-order: stroke;
}
.pan {
  position: absolute;
  right: 20px;
  bottom: 48px;
  display: grid;
  place-items: center;
  width: 80px;
  height: 80px;
  padding: 0;
  background: #fff;
  border: 0;
  border-radius: 50%;
  box-shadow: 0 2px 8px rgba(0, 0, 0, .2);
}
.pan svg { width: 46px; height: 46px; }
.map-links {
  position: absolute;
  right: 0;
  bottom: 0;
  display: flex;
  height: 28px;
  background: rgba(245, 245, 245, .8);
}
.map-links button, .map-links a {
  padding: 0 11px;
  background: none;
  border: 0;
  border-left: 2px solid rgba(215, 235, 225, .8);
  color: #111;
  font: 20px/28px Roboto, sans-serif;
  text-decoration: none;
}
.map-links button:first-child { border-left: 0; }
```
